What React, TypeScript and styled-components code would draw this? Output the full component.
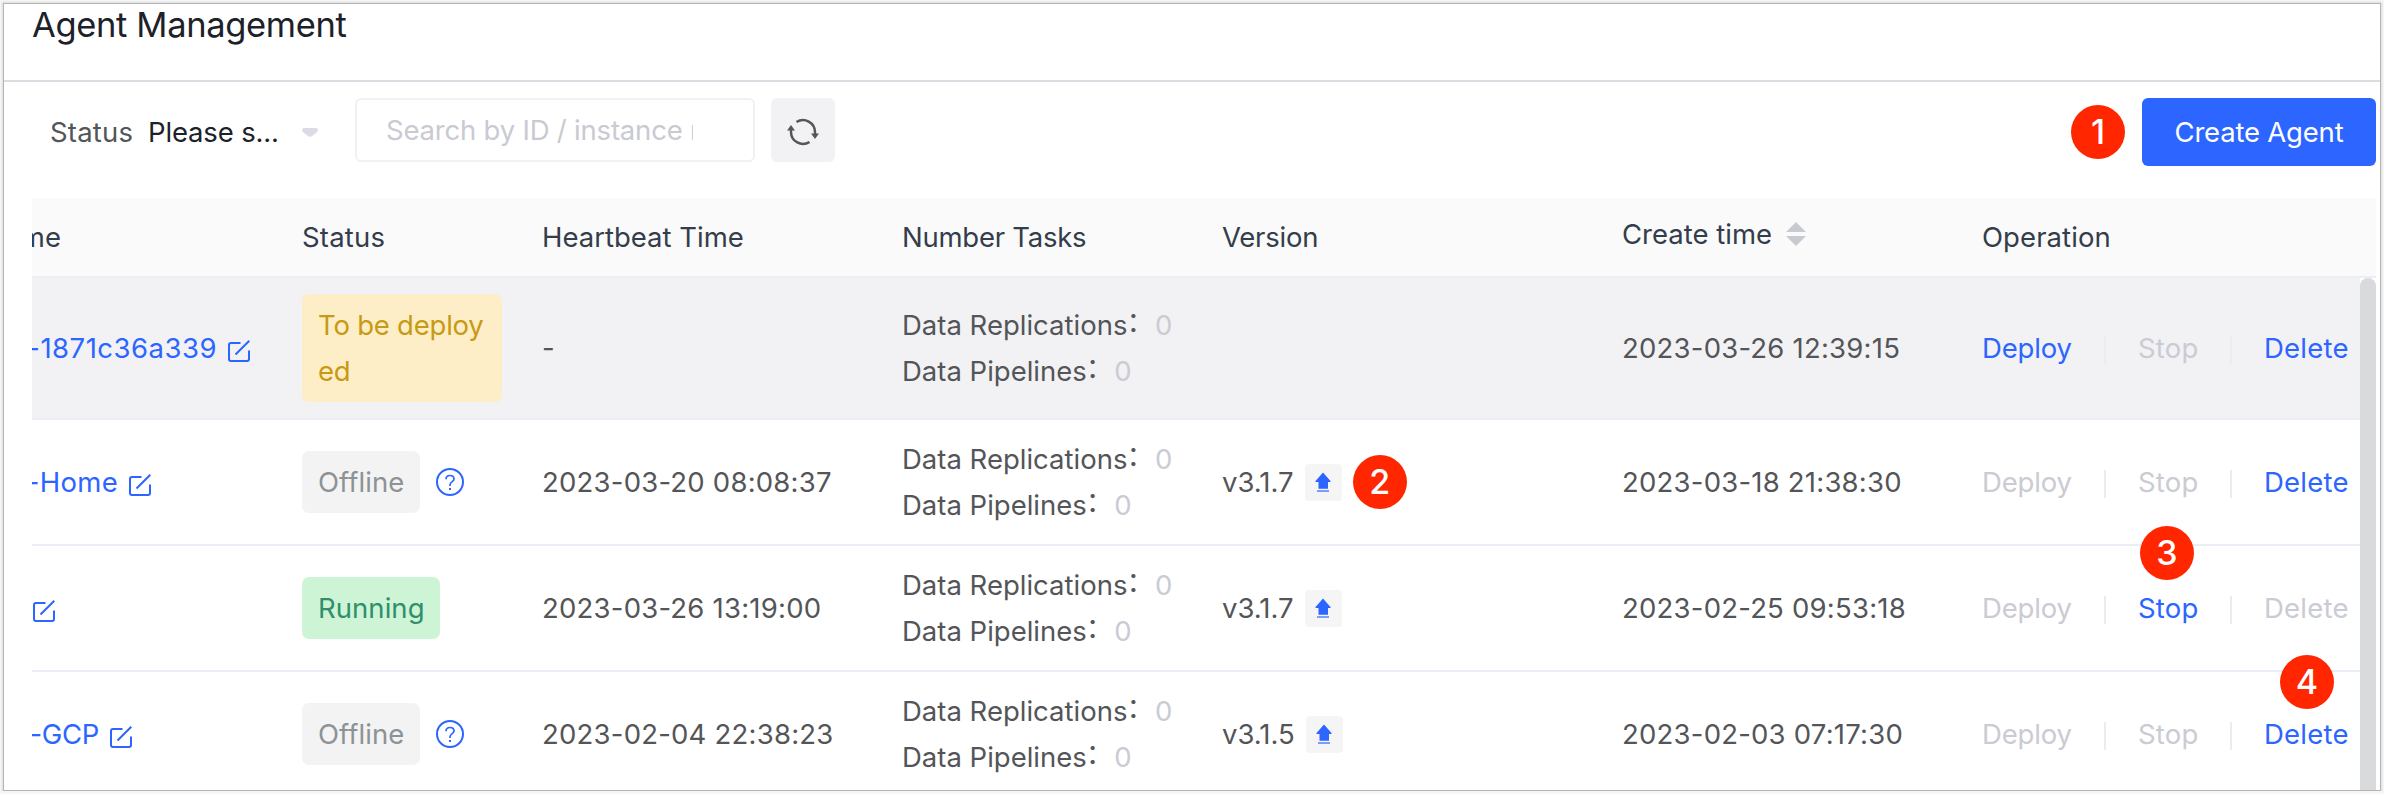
import React from 'react';
import styled, { createGlobalStyle, css } from 'styled-components';

const GlobalStyle = createGlobalStyle`
  *, *::before, *::after { box-sizing: border-box; }
  body {
    margin: 0;
    background: #f6f6f6;
    color: #535558;
    font-family: Inter, "Noto Sans CJK SC", sans-serif;
    font-size: 27.5px;
    line-height: 46px;
  }
`;

const blue = '#2c65ff';
const disabled = '#cacbd3';

const Window = styled.main`
  height: 788px;
  margin: 3px 3px 0;
  padding-right: 4px;
  overflow: hidden;
  background: #fff;
  border: 1px solid #b4b4b4;
  box-shadow: 0 0 2px 1px #dcdcdc;
`;

const PageHeader = styled.header`
  height: 78px;
  margin-right: -4px;
  padding-left: 28px;
  border-bottom: 2px solid #dcdde3;
`;

const Title = styled.h1`
  margin: 0;
  color: #1d2129;
  font-size: 34.5px;
  font-weight: 400;
  line-height: 42px;
  letter-spacing: -0.35px;
`;

const Toolbar = styled.div`
  display: flex;
  align-items: flex-start;
  height: 116px;
  padding: 16px 0 0 46px;
`;

const StatusSelect = styled.div`
  display: flex;
  align-items: center;
  width: 305px;
  height: 68px;
`;

const SelectLabel = styled.span`
  width: 98px;
  letter-spacing: 0.2px;
`;

const SelectValue = styled.span`
  width: 154px;
  color: #1d2129;
  letter-spacing: -0.15px;
`;

const SearchBox = styled.div`
  width: 400px;
  height: 64px;
  padding: 7px 60px 0 29px;
  border: 2px solid #f1f1f4;
  border-radius: 6px;
`;

const Placeholder = styled.span`
  display: block;
  overflow: hidden;
  color: #c9cad2;
  letter-spacing: -0.2px;
  white-space: nowrap;
`;

const RefreshButton = styled.button`
  display: grid;
  place-items: center;
  width: 64px;
  height: 64px;
  margin-left: 16px;
  padding: 4px 0 0;
  background: #f2f2f5;
  border: 0;
  border-radius: 6px;
`;

const CreateGroup = styled.div`
  display: flex;
  align-items: center;
  gap: 17px;
  margin-left: auto;
`;

const CreateButton = styled.button`
  width: 234px;
  height: 68px;
  padding: 0;
  background: ${blue};
  border: 0;
  border-radius: 6px;
  color: #fff;
  font: inherit;
  letter-spacing: -0.2px;
`;

const Step = styled.span`
  flex: none;
  width: 54px;
  height: 54px;
  background: #ff2600;
  border-radius: 50%;
  color: #fff;
  font-size: 34px;
  font-weight: 500;
  line-height: 54px;
  letter-spacing: 0;
  text-align: center;
`;

const FloatingStep = styled(Step)<{ $left: number; $top: number }>`
  position: absolute;
  top: ${(p) => p.$top}px;
  left: ${(p) => p.$left}px;
`;

const Table = styled.section`
  margin-left: 28px;
`;

const columns = css`
  display: grid;
  grid-template-columns: 250px 240px 360px 320px 400px 360px 398px;
`;

const HeadRow = styled.div`
  ${columns}
  height: 80px;
  background: #fafafa;
  border-bottom: 2px solid #ebeef7;
  color: #343d4b;
`;

const HeadCell = styled.div<{ $spacing?: number; $lift?: boolean }>`
  display: flex;
  align-items: center;
  gap: 14px;
  overflow: hidden;
  padding: 0 20px ${(p) => (p.$lift ? 6 : 0)}px;
  letter-spacing: ${(p) => p.$spacing ?? 0}px;
  white-space: nowrap;
`;

const NameHead = styled(HeadCell)`
  justify-content: flex-end;
  padding: 0 221px 0 0;
`;

const Body = styled.div`
  display: flex;
  align-items: flex-start;
`;

const Rows = styled.div`
  flex: 1;
`;

const ScrollThumb = styled.div`
  width: 16px;
  height: 530px;
  background: #d9dadb;
  border-radius: 8px 8px 0 0;
`;

const Row = styled.div<{ $active?: boolean }>`
  ${columns}
  width: 2328px;
  height: ${(p) => (p.$active ? 142 : 126)}px;
  background: ${(p) => (p.$active ? '#f2f2f5' : '#fff')};
  border-bottom: 2px solid #ebeef7;
`;

const Cell = styled.div`
  display: flex;
  align-items: center;
  padding: 0 20px;
  white-space: nowrap;
`;

const NameCell = styled(Cell)<{ $end: number }>`
  justify-content: flex-end;
  gap: 11px;
  overflow: hidden;
  padding: 0 ${(p) => 250 - p.$end}px 0 0;
  color: ${blue};
`;

const Name = styled.span<{ $spacing: number }>`
  letter-spacing: ${(p) => p.$spacing}px;
`;

const EditSvg = styled.svg`
  flex: none;
  margin-top: 5px;
`;

const HelpSvg = styled.svg`
  flex: none;
  margin-left: 16px;
`;

type Status = 'pending' | 'offline' | 'running';

const tagColors: Record<Status, [string, string]> = {
  pending: ['#fdeec8', '#c89a13'],
  offline: ['#f3f3f4', '#8d9296'],
  running: ['#cdf4d5', '#2f8f6d'],
};

const Tag = styled.span<{ $status: Status }>`
  width: ${(p) => ({ pending: 200, offline: 118, running: 138 }[p.$status])}px;
  padding: 8px 0 8px 16px;
  background: ${(p) => tagColors[p.$status][0]};
  border-radius: 7px;
  color: ${(p) => tagColors[p.$status][1]};
  letter-spacing: ${(p) => (p.$status === 'pending' ? -0.22 : 0.05)}px;
  white-space: ${(p) => (p.$status === 'pending' ? 'normal' : 'nowrap')};
  word-break: break-all;
`;

const PendingTag = styled(Tag)`
  padding-right: 16px;
`;

const DateCell = styled(Cell)`
  letter-spacing: 0.22px;
`;

const TaskCell = styled(Cell)`
  flex-direction: column;
  align-items: flex-start;
  justify-content: center;
`;

const TaskLine = styled.div`
  display: flex;
`;

const Colon = styled.span`
  transform: translate(-1px, -3px);
`;

const TaskCount = styled.span`
  color: ${disabled};
`;

const VersionCell = styled(Cell)`
  gap: 11px;
`;

const UpgradeChip = styled.span`
  display: grid;
  place-items: center;
  width: 37px;
  height: 37px;
  background: #f5f5f6;
  border-radius: 4px;
`;

const OperationCell = styled(Cell)`
  position: relative;
`;

const Action = styled.a<{ $enabled: boolean; $width: number; $spacing: number }>`
  flex: none;
  width: ${(p) => p.$width}px;
  color: ${(p) => (p.$enabled ? blue : disabled)};
  letter-spacing: ${(p) => p.$spacing}px;
`;

const Divider = styled.i`
  flex: none;
  width: 2px;
  height: 28px;
  margin: 4px 32px 0;
  background: #ebecef;
`;

const EditIcon = () => (
  <EditSvg width="22" height="22" viewBox="0 0 22 22" fill="none" stroke={blue} strokeWidth="2">
    <path d="M12.5 3H3Q1 3 1 5V19Q1 21 3 21H19Q21 21 21 19V10.5M21.3 0.8L7.5 14.5" />
  </EditSvg>
);

const HelpIcon = () => (
  <HelpSvg width="28" height="28" viewBox="0 0 28 28" fill="none" stroke={blue} strokeWidth="2">
    <circle cx="14" cy="14" r="13" />
    <path d="M10 11.2C10 8.8 11.7 7.5 14 7.5S18 8.9 18 11C18 13.6 14 13.8 14 17V18" strokeWidth="1.7" />
    <path d="M14 20V22" />
  </HelpSvg>
);

const UpgradeIcon = () => (
  <svg width="16" height="20" viewBox="0 0 16 20" fill={blue}>
    <path d="M8 0.5L15.5 9Q16 10 15 10H13V16.8H3.5V10H1Q0 10 0.5 9Z" />
    <path d="M2 18.4H14V19.6H2Z" />
  </svg>
);

const RefreshIcon = () => (
  <svg width="32" height="28" viewBox="0 0 32 28" fill="none" stroke="#535759" strokeWidth="2.5">
    <path d="M9.5 4A12 12 0 0 1 28 14V17M22.5 24A12 12 0 0 1 4 14V11" />
    <path d="M24 15.5H32L28 21ZM0 12.5H8L4 7Z" fill="#535759" stroke="none" />
  </svg>
);

const CaretIcon = () => (
  <svg width="16" height="9" viewBox="0 0 16 9" fill="#dadbe5">
    <path d="M1.5 0H14.5Q17 1.5 15 4L10 8Q8 9.5 6 8L1 4Q-1 1.5 1.5 0Z" />
  </svg>
);

const SortIcon = () => (
  <svg width="20" height="24" viewBox="0 0 20 24" fill="#c9cad0">
    <path d="M10 0L20 10H0ZM0 14H20L10 24Z" />
  </svg>
);

interface Agent {
  name: string;
  nameEnd: number;
  nameSpacing: number;
  status: Status;
  heartbeat: string;
  version?: string;
  created: string;
  enabled: string[];
}

const agents: Agent[] = [
  { name: '-1871c36a339', nameEnd: 218, nameSpacing: 0.49, status: 'pending', heartbeat: '-', created: '2023-03-26 12:39:15', enabled: ['Deploy', 'Delete'] },
  { name: '-Home', nameEnd: 119, nameSpacing: 0.3, status: 'offline', heartbeat: '2023-03-20 08:08:37', version: 'v3.1.7', created: '2023-03-18 21:38:30', enabled: ['Delete'] },
  { name: '', nameEnd: 23, nameSpacing: 0, status: 'running', heartbeat: '2023-03-26 13:19:00', version: 'v3.1.7', created: '2023-02-25 09:53:18', enabled: ['Stop'] },
  { name: '-GCP', nameEnd: 100, nameSpacing: -0.3, status: 'offline', heartbeat: '2023-02-04 22:38:23', version: 'v3.1.5', created: '2023-02-03 07:17:30', enabled: ['Delete'] },
];

const StatusTag = ({ status }: { status: Status }) => {
  if (status === 'pending') return <PendingTag $status={status}>To be deployed</PendingTag>;
  return <Tag $status={status}>{status === 'offline' ? 'Offline' : 'Running'}</Tag>;
};

const AgentRow = ({ agent, index }: { agent: Agent; index: number }) => {
  const can = (action: string) => agent.enabled.includes(action);
  return (
    <Row $active={index === 0}>
      <NameCell $end={agent.nameEnd}>
        {agent.name && <Name $spacing={agent.nameSpacing}>{agent.name}</Name>}
        <EditIcon />
      </NameCell>
      <Cell>
        <StatusTag status={agent.status} />
        {agent.status === 'offline' && <HelpIcon />}
      </Cell>
      <DateCell>{agent.heartbeat}</DateCell>
      <TaskCell>
        <TaskLine>Data Replications<Colon>：</Colon><TaskCount>0</TaskCount></TaskLine>
        <TaskLine>Data Pipelines<Colon>：</Colon><TaskCount>0</TaskCount></TaskLine>
      </TaskCell>
      <VersionCell>
        {agent.version && (
          <>
            {agent.version}
            <UpgradeChip><UpgradeIcon /></UpgradeChip>
          </>
        )}
        {index === 1 && <Step>2</Step>}
      </VersionCell>
      <DateCell>{agent.created}</DateCell>
      <OperationCell>
        <Action $enabled={can('Deploy')} $width={90} $spacing={-0.15}>Deploy</Action>
        <Divider />
        <Action $enabled={can('Stop')} $width={60} $spacing={0.2}>Stop</Action>
        <Divider />
        <Action $enabled={can('Delete')} $width={84} $spacing={0.24}>Delete</Action>
        {index === 2 && <FloatingStep $top={-20} $left={178}>3</FloatingStep>}
        {index === 3 && <FloatingStep $top={-17} $left={318}>4</FloatingStep>}
      </OperationCell>
    </Row>
  );
};

export default function App() {
  return (
    <>
      <GlobalStyle />
      <Window>
        <PageHeader>
          <Title>Agent Management</Title>
        </PageHeader>
        <Toolbar>
          <StatusSelect>
            <SelectLabel>Status</SelectLabel>
            <SelectValue>Please s...</SelectValue>
            <CaretIcon />
          </StatusSelect>
          <SearchBox>
            <Placeholder>Search by ID / instance name</Placeholder>
          </SearchBox>
          <RefreshButton aria-label="Refresh">
            <RefreshIcon />
          </RefreshButton>
          <CreateGroup>
            <Step>1</Step>
            <CreateButton>Create Agent</CreateButton>
          </CreateGroup>
        </Toolbar>
        <Table>
          <HeadRow>
            <NameHead>Name</NameHead>
            <HeadCell $spacing={0.2}>Status</HeadCell>
            <HeadCell>Heartbeat Time</HeadCell>
            <HeadCell $spacing={-0.25}>Number Tasks</HeadCell>
            <HeadCell $spacing={-0.25}>Version</HeadCell>
            <HeadCell $lift>Create time<SortIcon /></HeadCell>
            <HeadCell $spacing={0.08}>Operation</HeadCell>
          </HeadRow>
          <Body>
            <Rows>
              {agents.map((agent, index) => (
                <AgentRow key={agent.created} agent={agent} index={index} />
              ))}
            </Rows>
            <ScrollThumb />
          </Body>
        </Table>
      </Window>
    </>
  );
}
